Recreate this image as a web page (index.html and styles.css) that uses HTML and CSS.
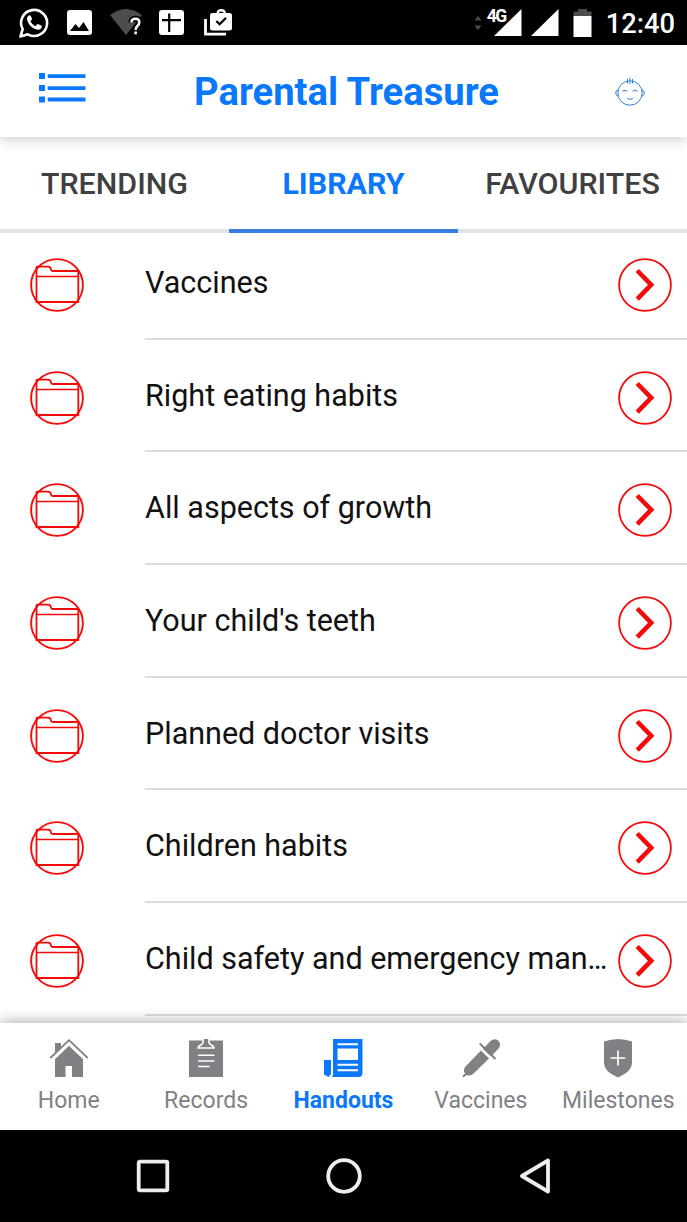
FILE: index.html
```html
<!DOCTYPE html>
<html lang="en">
<head>
    <meta charset="UTF-8">
    <meta name="viewport" content="width=device-width, initial-scale=1.0">
    <title>Parental Treasure</title>
    <link rel="stylesheet" href="styles.css">
</head>
<body>

    <!-- shared icons -->
    <svg class="sprite">
        <symbol id="folder" viewBox="0 0 54 54">
            <circle cx="27" cy="27" r="25.9" stroke-width="1.9"/>
            <path d="M6.5 44V9Q6.5 8.7 8 8.7H18Q20.5 8.7 20.8 11Q21 13 23 13H48.3V44Z" stroke-width="1.8"/>
            <path d="M6.5 18.5H48.3" stroke-width="1.5"/>
        </symbol>
        <symbol id="arrow" viewBox="0 0 54 54">
            <circle cx="27" cy="27" r="25.9" stroke-width="1.8"/>
            <path d="M19.2 12.5L33.2 26.8L19.2 41.2" stroke-width="4.6"/>
        </symbol>
    </svg>

    <div class="status-bar">
        <div class="status-left">
            <svg width="30" height="30" viewBox="0 0 30 30">
                <path d="M1.5 28.5L3.7 21.2A13 13 0 1 1 8.8 26.3Z" fill="none" stroke="#fff" stroke-width="2.6" stroke-linejoin="round"/>
                <path d="M10 7.5C8.6 8.2 7.8 9.8 8.1 11.5C9 16.5 13.5 21 18.8 21.8C20.8 22 22.5 20.8 22.8 18.8C22.9 18.2 22.7 17.9 22.2 17.6L19.4 16.2C18.8 15.9 18.4 16 18 16.5L16.9 17.8C16.6 18.1 16.3 18.1 15.9 17.9C14 17 12.6 15.5 11.7 13.8C11.5 13.4 11.5 13.1 11.8 12.8L12.7 11.7C13 11.3 13.1 10.9 12.9 10.5L11.8 8C11.4 7.3 10.8 7.2 10 7.5Z" fill="#fff"/>
            </svg>
            <svg width="25" height="25" viewBox="0 0 25 25">
                <rect width="25" height="25" rx="3" fill="#fff"/>
                <path d="M3 21L8.5 14L12 18L16.5 12L22 21Z" fill="#000"/>
            </svg>
            <svg width="33" height="28" viewBox="0 0 33 28">
                <path d="M0 6Q16 -6 32 6L16 26Z" fill="#4d4d4d"/>
                <path d="M21.5 13.5Q21.5 9.8 25.5 9.8Q29.3 9.8 29.3 13.3Q29.3 15.5 27.2 17.2Q25.7 18.5 25.6 21M25.6 22.8V25.4" fill="none" stroke="#000" stroke-width="6"/>
                <path d="M21.5 13.5Q21.5 9.8 25.5 9.8Q29.3 9.8 29.3 13.3Q29.3 15.5 27.2 17.2Q25.7 18.5 25.6 21M25.6 22.4V25.2" fill="none" stroke="#fff" stroke-width="2.6"/>
            </svg>
            <svg class="plus" width="25" height="25" viewBox="0 0 25 25">
                <rect width="25" height="25" rx="3" fill="#fff"/>
                <path d="M10.2 3.5V22M3 10.2H22" stroke="#000" stroke-width="2.2"/>
            </svg>
            <svg width="29" height="27" viewBox="0 0 29 27">
                <path d="M1.5 10V25.2H22" fill="none" stroke="#fff" stroke-width="2.8"/>
                <path d="M8 4H12.5Q12.8 0 17.3 0Q21.5 0 22 4H25.5Q28 4 28 6.5V19Q28 21.5 25.5 21.5H8.5Q6 21.5 6 19V6.5Q6 4 8 4Z" fill="#fff"/>
                <path d="M15.2 4H19.2V2.7H15.2Z" fill="#000"/>
                <path d="M12.3 12L15.6 15.3L22 8.9" fill="none" stroke="#000" stroke-width="2.2"/>
            </svg>
        </div>
        <div class="status-right">
            <svg width="8" height="16" viewBox="0 0 8 16">
                <path d="M0.5 5.5L4 1L7.5 5.5ZM0.5 10.5L4 15L7.5 10.5Z" fill="#4d4d4d"/>
            </svg>
            <div class="signal">
                <svg width="28" height="27" viewBox="0 0 28 27"><path d="M0 27L27.5 0V27Z" fill="#fff"/></svg>
                <span class="network">4G</span>
            </div>
            <svg class="signal-two" width="28" height="27" viewBox="0 0 28 27"><path d="M0 27L27.5 0V27Z" fill="#fff"/></svg>
            <svg class="battery" width="19" height="28" viewBox="0 0 19 28">
                <path d="M0.5 7V2.5H5V0H14V2.5H18.5V7Z" fill="#4d4d4d"/>
                <rect x="0.5" y="7" width="18" height="21" fill="#fff"/>
            </svg>
            <span class="clock">12:40</span>
        </div>
    </div>

    <div class="header">
        <svg class="menu" width="48" height="30" viewBox="0 0 48 30">
            <path d="M0 0H6V6H0ZM0 12H6V18H0ZM0 23.5H6V29.5H0ZM8.7 1.2H46.5V5H8.7ZM8.7 13.2H46.5V17H8.7ZM8.7 24.6H46.5V28.4H8.7Z" fill="#0a78fb"/>
        </svg>
        <h1>Parental Treasure</h1>
        <svg class="baby" width="30" height="30" viewBox="0 0 30 30" fill="none" stroke="#2f7fd8" stroke-width="1">
            <circle cx="15" cy="16" r="12.2"/>
            <path d="M3 13Q0.7 13.2 0.7 16Q0.7 18.6 3.4 19.2M27 13Q29.3 13.2 29.3 16Q29.3 18.6 26.6 19.2"/>
            <path d="M15 0.8V7M12.5 2V6.5M17.5 2V6.5"/>
            <path d="M7.3 14.2Q9.7 12.3 12.3 14.2M17.7 14.2Q20.3 12.3 22.7 14.2M12.3 21.3Q15 23.8 17.8 21.3"/>
        </svg>
    </div>

    <div class="tabs">
        <div class="tab">TRENDING</div>
        <div class="tab active">LIBRARY</div>
        <div class="tab">FAVOURITES</div>
    </div>

    <div class="list">
        <div class="row">
            <svg class="icon"><use href="#folder"/></svg>
            <div class="row-body"><span class="name">Vaccines</span><svg class="icon"><use href="#arrow"/></svg></div>
        </div>
        <div class="row">
            <svg class="icon"><use href="#folder"/></svg>
            <div class="row-body"><span class="name">Right eating habits</span><svg class="icon"><use href="#arrow"/></svg></div>
        </div>
        <div class="row">
            <svg class="icon"><use href="#folder"/></svg>
            <div class="row-body"><span class="name">All aspects of growth</span><svg class="icon"><use href="#arrow"/></svg></div>
        </div>
        <div class="row">
            <svg class="icon"><use href="#folder"/></svg>
            <div class="row-body"><span class="name">Your child's teeth</span><svg class="icon"><use href="#arrow"/></svg></div>
        </div>
        <div class="row">
            <svg class="icon"><use href="#folder"/></svg>
            <div class="row-body"><span class="name">Planned doctor visits</span><svg class="icon"><use href="#arrow"/></svg></div>
        </div>
        <div class="row">
            <svg class="icon"><use href="#folder"/></svg>
            <div class="row-body"><span class="name">Children habits</span><svg class="icon"><use href="#arrow"/></svg></div>
        </div>
        <div class="row">
            <svg class="icon"><use href="#folder"/></svg>
            <div class="row-body"><span class="name">Child safety and emergency man<span class="dots">...</span></span><svg class="icon"><use href="#arrow"/></svg></div>
        </div>
    </div>

    <div class="bottom-nav">
        <div class="nav-item">
            <svg width="40" height="40" viewBox="0 0 40 40">
                <path d="M6 38V17.5L20 5L34 17.5V38H23V27H16.5V38Z" fill="#808184"/>
                <path d="M2.5 20L20 3.4L37.5 20" fill="none" stroke="#fff" stroke-width="5"/>
                <path d="M6 4H12V9L6 15Z" fill="#808184"/>
                <path d="M1.3 19L20 1.2L38.7 19" fill="none" stroke="#808184" stroke-width="1.8"/>
            </svg>
            <span>Home</span>
        </div>
        <div class="nav-item">
            <svg width="40" height="40" viewBox="0 0 40 40">
                <path d="M3 1.5H37V38H3Z" fill="#808184"/>
                <path d="M17 -1V3Q17 5 14 6.5Q12.2 7.5 12 9H28Q27.8 7.5 26 6.5Q23 5 23 3V-1Z" fill="#808184" stroke="#fff" stroke-width="1.6"/>
                <path d="M12 16.2H28.5M12 22H28.5M12 27.5H23.5" stroke="#fff" stroke-width="1.6"/>
            </svg>
            <span>Records</span>
        </div>
        <div class="nav-item active">
            <svg width="40" height="40" viewBox="0 0 40 40">
                <path d="M10 0H39.5V34Q39.5 38 35.5 38H8.5Q10 37.5 10 35ZM1 21H8V35L5.5 38L1 35.5Z" fill="#0a78fb"/>
                <path d="M14.5 9.5H35V21H14.5Z" fill="#fff"/>
                <path d="M14.5 5.2H35M14.5 25.7H35M14.5 31.2H35" stroke="#fff" stroke-width="2"/>
            </svg>
            <span>Handouts</span>
        </div>
        <div class="nav-item">
            <svg width="40" height="40" viewBox="0 0 40 40">
                <path d="M22 10L29.5 2Q33.5 -1 37 1.5Q40.5 5 38 9L30 17.5Z" fill="#808184"/>
                <path d="M20 11.5L28 19.5L12 35Q9 37.5 5.5 36L2.5 38.5L1.3 37.3L4 34.5Q1.5 31 4.5 27.5Z" fill="#808184"/>
                <path d="M18.7 4.5L34.5 20" stroke="#808184" stroke-width="2"/>
            </svg>
            <span>Vaccines</span>
        </div>
        <div class="nav-item">
            <svg width="40" height="40" viewBox="0 0 40 40">
                <path d="M6 2.5Q20 -2.5 34 2.5V24Q34 32.5 20 38.5Q6 32.5 6 24Z" fill="#808184"/>
                <path d="M20 11.5V26.5M12.7 19H27.3" stroke="#fff" stroke-width="1.7"/>
            </svg>
            <span>Milestones</span>
        </div>
    </div>

    <div class="system-nav">
        <svg width="36" height="36" viewBox="0 0 36 36"><rect x="3.7" y="3.7" width="28.6" height="28.6" rx="1"/></svg>
        <svg width="36" height="36" viewBox="0 0 36 36"><circle cx="18" cy="18" r="15.8"/></svg>
        <svg width="36" height="36" viewBox="0 0 36 36"><path d="M31 2.5V33.5L5 18Z"/></svg>
    </div>

</body>
</html>
```
FILE: styles.css
```css
* {
    box-sizing: border-box;
}

body {
    margin: 0;
    width: 687px;
    height: 1222px;
    overflow: hidden;
    display: flex;
    flex-direction: column;
    background: #fff;
    font-family: Roboto, sans-serif;
}

svg {
    display: block;
    flex-shrink: 0;
}

.sprite {
    position: absolute;
    width: 0;
    height: 0;
}

.status-bar {
    height: 45px;
    flex-shrink: 0;
    background: #000;
    color: #fff;
    display: flex;
    justify-content: space-between;
    padding: 0 12px 0 19px;
    position: relative;
    z-index: 3;
}

.status-left, .status-right {
    display: flex;
    align-items: center;
}

.status-left {
    gap: 18px;
}

.plus {
    margin: 0 2px 0 -2px;
}

.signal {
    position: relative;
    margin-left: 12px;
}

.network {
    position: absolute;
    left: -7px;
    top: -3px;
    font-size: 17.5px;
    line-height: 20px;
    font-weight: bold;
    letter-spacing: -1.5px;
    text-shadow: 1px 1px 1px #000;
}

.signal-two {
    margin-left: 9px;
}

.battery {
    margin-left: 14px;
}

.clock {
    margin-left: 14px;
    font-size: 27.3px;
    font-weight: 500;
    line-height: 45px;
    padding-top: 3px;
}

.header {
    height: 92px;
    flex-shrink: 0;
    display: flex;
    align-items: center;
    justify-content: space-between;
    padding: 0 42px 0 39px;
    background: #fff;
    box-shadow: 0 2px 14px rgba(0, 0, 0, 0.22);
    position: relative;
    z-index: 2;
}

.header h1 {
    margin: 2px 0 0 -9px;
    font-size: 38.2px;
    font-weight: bold;
    color: #0a78fb;
}

.menu {
    margin-top: -6px;
}

.baby {
    margin-top: 2px;
}

.tabs {
    height: 96px;
    flex-shrink: 0;
    display: grid;
    grid-template-columns: repeat(3, 1fr);
}

.tab {
    padding-top: 2px;
    border-bottom: 4px solid #e4e4e4;
    text-align: center;
    font-size: 30.4px;
    font-weight: 500;
    line-height: 90px;
    color: #404040;
}

.tab.active {
    color: #0a78fb;
    font-weight: bold;
    border-color: #3a7ddd;
}

.list {
    height: 790px;
    margin-top: -6px;
    flex-grow: 1;
    min-height: 0;
    overflow: hidden;
}

.row {
    height: 112.7px;
    display: flex;
    padding-left: 30px;
}

.icon {
    width: 54px;
    height: 54px;
    margin-top: 31px;
    fill: none;
    stroke: #f50a0a;
}

.row-body {
    flex: 1;
    min-width: 0;
    margin-left: 61px;
    padding-right: 15px;
    display: flex;
    justify-content: space-between;
    border-bottom: 2px solid #dcdcdc;
}

.name {
    width: 462px;
    font-size: 30.5px;
    line-height: 111px;
    color: #111;
    white-space: nowrap;
}

.dots {
    letter-spacing: -2px;
}

.bottom-nav {
    height: 107px;
    flex-shrink: 0;
    display: grid;
    grid-template-columns: repeat(5, 1fr);
    background: #fff;
    box-shadow: 0 -2px 12px rgba(0, 0, 0, 0.3);
    position: relative;
}

.nav-item {
    display: flex;
    flex-direction: column;
    align-items: center;
    padding-top: 16px;
    font-size: 23px;
    line-height: 28px;
    color: #808184;
}

.nav-item span {
    margin-top: 8px;
}

.nav-item.active {
    color: #0a78fb;
    font-weight: bold;
}

.system-nav {
    height: 92px;
    flex-shrink: 0;
    background: #000;
    display: flex;
    align-items: center;
    justify-content: center;
    gap: 155px;
    position: relative;
}

.system-nav svg {
    fill: none;
    stroke: #eee;
    stroke-width: 3.8;
    stroke-linejoin: round;
}
```
